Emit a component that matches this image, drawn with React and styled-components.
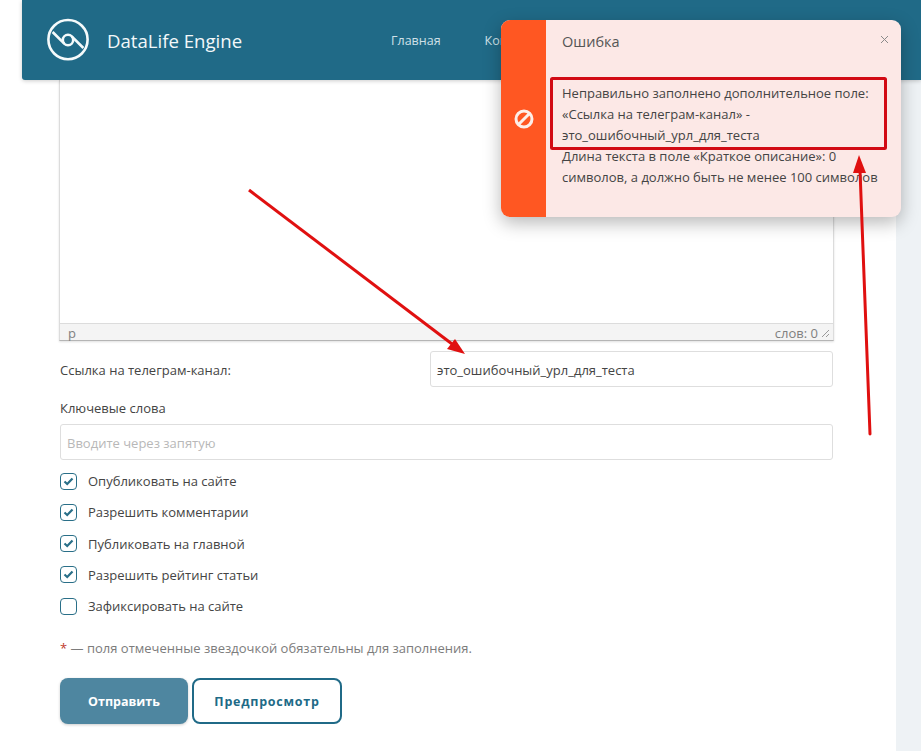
import React from 'react';
import styled, { createGlobalStyle } from 'styled-components';

const GlobalStyle = createGlobalStyle`
  html, body {
    margin: 0;
    padding: 0;
    background: #fff;
    font-family: "Open Sans", "Noto Sans", sans-serif;
    color: #444;
  }
`;

const Page = styled.div`
  position: relative;
  width: 921px;
  height: 751px;
  overflow: hidden;
`;

const Header = styled.header`
  height: 80px;
  margin-left: 22px;
  padding-left: 24px;
  display: flex;
  align-items: center;
  background: #206a87;
  border-radius: 0 0 0 3px;
  box-shadow: 0 1px 4px rgba(0, 0, 0, 0.2);
  position: relative;
  z-index: 1;
`;

const Logo = styled.svg`
  width: 44px;
  height: 44px;
  flex: none;
`;

const Brand = styled.div`
  margin-left: 17px;
  width: 284px;
  font-size: 18.6px;
  color: #f3f8fa;
`;

const Nav = styled.nav`
  display: flex;
  gap: 44px;
`;

const NavLink = styled.a`
  font-size: 12.5px;
  color: #cfe0e7;
`;

const Body = styled.div`
  display: flex;
  height: 671px;
`;

const Main = styled.main`
  width: 896px;
  box-sizing: border-box;
  padding: 0 62px 0 59px;
  display: flex;
  flex-direction: column;
`;

const Strip = styled.aside`
  flex: 1;
  background: #eef2f5;
`;

const Editor = styled.div`
  height: 261px;
  box-sizing: border-box;
  display: flex;
  flex-direction: column;
  justify-content: flex-end;
  border-left: 1px solid #dcdcdc;
  border-right: 1px solid #dcdcdc;
  border-bottom: 1px solid #b5b5b5;
  box-shadow: 0 1px 2px rgba(0, 0, 0, 0.12);
`;

const StatusBar = styled.div`
  height: 17px;
  box-sizing: border-box;
  padding: 2px 3px 0 8px;
  display: flex;
  align-items: center;
  justify-content: space-between;
  background: #f4f4f4;
  border-top: 1px solid #dcdcdc;
  font-size: 13px;
  line-height: 14px;
  color: #808080;
`;

const WordCount = styled.span`
  display: flex;
  align-items: center;
  gap: 3px;
`;

const Grip = styled.svg`
  width: 9px;
  height: 9px;
`;

const FieldRow = styled.div`
  margin: 10px 1px 0 0;
  display: flex;
  align-items: center;
`;

const FieldLabel = styled.label`
  width: 371px;
  padding-left: 1px;
  box-sizing: border-box;
  font-size: 13px;
  padding-top: 2px;
`;

const TextInput = styled.div`
  flex: 1;
  height: 36px;
  box-sizing: border-box;
  padding: 2px 6px 0;
  display: flex;
  align-items: center;
  border: 1px solid #dedede;
  border-radius: 3px;
  font-size: 13px;
  color: #444;
`;

const KeywordsInput = styled(TextInput)`
  flex: none;
  margin: 0 1px;
  color: #b8b8b8;
`;

const BlockLabel = styled.div`
  margin: 12px 0 7px 1px;
  font-size: 13px;
  line-height: 18px;
`;

const Checks = styled.div`
  margin: 12px 0 0 1px;
  display: flex;
  flex-direction: column;
  gap: 13.25px;
`;

const CheckRow = styled.label`
  display: flex;
  align-items: center;
  gap: 11px;
  height: 18px;
  font-size: 13px;
`;

const CheckBox = styled.span`
  width: 17px;
  height: 17px;
  box-sizing: border-box;
  display: flex;
  align-items: center;
  justify-content: center;
  border: 1.5px solid #2a6f88;
  border-radius: 4px;
`;

const Note = styled.p`
  margin: 24px 0 0 1px;
  font-size: 13px;
  line-height: 18px;
  color: #7c7c7c;
`;

const Star = styled.span`
  color: #c0392b;
`;

const Buttons = styled.div`
  margin: 21px 0 0 1px;
  display: flex;
  gap: 4px;
`;

const Button = styled.button`
  height: 46px;
  width: ${(p) => (p.$outline ? '150px' : '128px')};
  box-sizing: border-box;
  border-radius: 8px;
  font-family: inherit;
  font-size: 12.5px;
  font-weight: 700;
  letter-spacing: ${(p) => (p.$outline ? '0.75px' : '0')};
  border: ${(p) => (p.$outline ? '2px solid #206a87' : 'none')};
  background: ${(p) => (p.$outline ? '#fff' : '#4e86a0')};
  color: ${(p) => (p.$outline ? '#206a87' : '#fff')};
  box-shadow: ${(p) => (p.$outline ? 'none' : '0 1px 3px rgba(0, 0, 0, 0.2)')};
`;

const Toast = styled.div`
  position: absolute;
  left: 501px;
  top: 20px;
  width: 400px;
  height: 197px;
  display: flex;
  background: #fce8e6;
  border-radius: 9px;
  overflow: hidden;
  box-shadow: 0 6px 18px rgba(0, 0, 0, 0.28);
  z-index: 2;
`;

const ToastSide = styled.div`
  width: 45px;
  flex: none;
  display: flex;
  align-items: center;
  justify-content: center;
  background: #ff5722;
`;

const ToastBody = styled.div`
  flex: 1;
  position: relative;
  padding: 11px 16px 0 16px;
`;

const ToastTitle = styled.div`
  font-size: 14.5px;
  line-height: 21px;
  color: #555;
`;

const ToastText = styled.div`
  margin-top: 31px;
  font-size: 13px;
  line-height: 21px;
  color: #444;
`;

const Close = styled.svg`
  position: absolute;
  right: 12px;
  top: 15px;
  width: 9px;
  height: 9px;
`;

const Notes = styled.svg`
  position: absolute;
  left: 0;
  top: 0;
  width: 921px;
  height: 751px;
  pointer-events: none;
  z-index: 3;
`;

const checks = [
  ['Опубликовать на сайте', true],
  ['Разрешить комментарии', true],
  ['Публиковать на главной', true],
  ['Разрешить рейтинг статьи', true],
  ['Зафиксировать на сайте', false],
];

export default function App() {
  return (
    <Page>
      <GlobalStyle />
      <Header>
        <Logo viewBox="0 0 44 44" fill="none" stroke="#f5fafb" strokeWidth="2.6">
          <circle cx="22" cy="21.6" r="19.6" />
          <circle cx="22" cy="22" r="5.2" />
          <path d="M6.6 14 L18.3 25.7 M25.7 18.3 L37.4 30" />
        </Logo>
        <Brand>DataLife Engine</Brand>
        <Nav>
          <NavLink>Главная</NavLink>
          <NavLink>Контакты</NavLink>
        </Nav>
      </Header>
      <Body>
        <Main>
          <Editor>
            <StatusBar>
              <span>p</span>
              <WordCount>
                слов: 0
                <Grip viewBox="0 0 9 9" stroke="#999" strokeWidth="1">
                  <path d="M1 8 L8 1 M5 8 L8 5" />
                </Grip>
              </WordCount>
            </StatusBar>
          </Editor>
          <FieldRow>
            <FieldLabel>Ссылка на телеграм-канал:</FieldLabel>
            <TextInput>это_ошибочный_урл_для_теста</TextInput>
          </FieldRow>
          <BlockLabel>Ключевые слова</BlockLabel>
          <KeywordsInput>Вводите через запятую</KeywordsInput>
          <Checks>
            {checks.map(([label, on]) => (
              <CheckRow key={label}>
                <CheckBox>
                  {on && (
                    <svg width="11" height="9" viewBox="0 0 11 9" fill="none" stroke="#2a6f88" strokeWidth="2.2">
                      <path d="M1.5 4.5 L4.2 7 L9.5 1.5" />
                    </svg>
                  )}
                </CheckBox>
                {label}
              </CheckRow>
            ))}
          </Checks>
          <Note><Star>*</Star> — поля отмеченные звездочкой обязательны для заполнения.</Note>
          <Buttons>
            <Button>Отправить</Button>
            <Button $outline>Предпросмотр</Button>
          </Buttons>
        </Main>
        <Strip />
      </Body>
      <Toast>
        <ToastSide>
          <svg width="20" height="20" viewBox="0 0 20 20" fill="none" stroke="#fdeee8" strokeWidth="3">
            <circle cx="10" cy="10" r="8" />
            <path d="M5 15 L15 5" />
          </svg>
        </ToastSide>
        <ToastBody>
          <ToastTitle>Ошибка</ToastTitle>
          <ToastText>
            Неправильно заполнено дополнительное поле:<br />
            «Ссылка на телеграм-канал» -<br />
            это_ошибочный_урл_для_теста<br />
            Длина текста в поле «Краткое описание»: 0<br />
            символов, а должно быть не менее 100 символов
          </ToastText>
          <Close viewBox="0 0 9 9" stroke="#8a8a8a" strokeWidth="1">
            <path d="M1 1 L8 8 M8 1 L1 8" />
          </Close>
        </ToastBody>
      </Toast>
      <Notes viewBox="0 0 921 751" fill="none">
        <rect x="551.5" y="78.5" width="334" height="70" stroke="#d20a14" strokeWidth="3" rx="1" />
        <path d="M249 190 L456 347" stroke="#e01010" strokeWidth="3" />
        <path d="M465 354 L447 349 L455 339 Z" fill="#e01010" />
        <path d="M870 434 L860 170" stroke="#e01010" strokeWidth="3" strokeLinecap="round" />
        <path d="M859 155 L853 173 L866 173 Z" fill="#e01010" />
      </Notes>
    </Page>
  );
}
